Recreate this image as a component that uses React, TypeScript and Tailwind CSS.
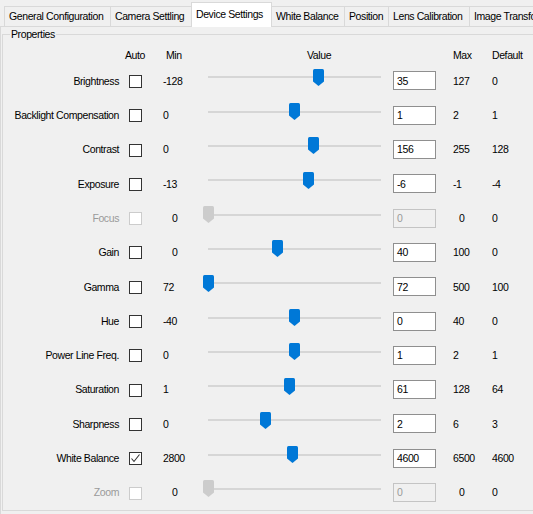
import React from "react";

type Row = {
  label: string;
  min: number;
  max: number;
  value: number;
  def: number;
  disabled?: boolean;
  checked?: boolean;
  minShift?: boolean;
  maxShift?: boolean;
};

const rows: Row[] = [
  { label: "Brightness", min: -128, max: 127, value: 35, def: 0 },
  { label: "Backlight Compensation", min: 0, max: 2, value: 1, def: 1 },
  { label: "Contrast", min: 0, max: 255, value: 156, def: 128 },
  { label: "Exposure", min: -13, max: -1, value: -6, def: -4 },
  { label: "Focus", min: 0, max: 0, value: 0, def: 0, disabled: true, minShift: true, maxShift: true },
  { label: "Gain", min: 0, max: 100, value: 40, def: 0, minShift: true },
  { label: "Gamma", min: 72, max: 500, value: 72, def: 100 },
  { label: "Hue", min: -40, max: 40, value: 0, def: 0 },
  { label: "Power Line Freq.", min: 0, max: 2, value: 1, def: 1 },
  { label: "Saturation", min: 1, max: 128, value: 61, def: 64 },
  { label: "Sharpness", min: 0, max: 6, value: 2, def: 3 },
  { label: "White Balance", min: 2800, max: 6500, value: 4600, def: 4600, checked: true },
  { label: "Zoom", min: 0, max: 0, value: 0, def: 0, disabled: true, minShift: true, maxShift: true },
];

const tabs = [
  { name: "General Configuration", w: "w-[107px]" },
  { name: "Camera Settling", w: "w-[81px]" },
  { name: "Device Settings", w: "w-[81px]", active: true },
  { name: "White Balance", w: "w-[73px]" },
  { name: "Position", w: "w-[44px]" },
  { name: "Lens Calibration", w: "w-[81px]" },
  { name: "Image Transform", w: "w-[80px]" },
];

function Thumb({ disabled }: { disabled?: boolean }) {
  return (
    <svg width="11" height="17" viewBox="0 0 11 17">
      <path
        d="M1.5 0 H9.5 Q11 0 11 1.5 V12.5 L5.5 17 L0 12.5 V1.5 Q0 0 1.5 0 Z"
        fill={disabled ? "#cccccc" : "#0078d7"}
      />
    </svg>
  );
}

function Checkbox({ checked, disabled }: { checked?: boolean; disabled?: boolean }) {
  return (
    <div
      className={
        "w-[13px] h-[13px] bg-white border flex items-center justify-center " +
        (disabled ? "border-[#cccccc]" : "border-[#333333]")
      }
    >
      {checked && (
        <svg width="11" height="11" viewBox="0 0 11 11">
          <polyline points="1.5,5.5 4,8.5 9.5,1.5" fill="none" stroke="#333333" strokeWidth="1.1" />
        </svg>
      )}
    </div>
  );
}

export default function App() {
  return (
    <div className="w-[533px] h-[514px] bg-[#f0f0f0] overflow-hidden font-['Liberation_Sans',Arial,sans-serif] text-[10.5px] tracking-[-0.4px] text-black leading-none">
      {/* tab bar */}
      <div className="h-[26px] flex items-end pl-[4px]">
        {tabs.map((t, i) =>
          t.active ? (
            <div
              key={t.name}
              className={
                t.w +
                " relative z-10 shrink-0 -ml-px -mb-px h-[25px] bg-white border-t border-l border-r border-[#d9d9d9] flex items-center pl-[4px] pb-[1px] whitespace-nowrap"
              }
            >
              {t.name}
            </div>
          ) : (
            <div
              key={t.name}
              className={
                t.w +
                " h-[20px] shrink-0 bg-[#f0f0f0] border-t border-r border-[#d9d9d9] flex items-center pl-[4px] whitespace-nowrap overflow-hidden " +
                (i === 0 ? "border-l" : "")
              }
            >
              {t.name}
            </div>
          )
        )}
      </div>

      {/* pane */}
      <div className="h-[488px] border-t border-l border-[#d9d9d9] pt-[7px] pl-[1px]">
        {/* group box */}
        <div className="relative w-[560px] h-[477px] border border-[#d9d9d9]">
          <span className="absolute left-[7px] top-[-7px] px-[1px] bg-[#f0f0f0] leading-[13px]">
            Properties
          </span>

          {/* header */}
          <div className="flex items-center h-[14px] mt-[13px]">
            <div className="w-[122px] shrink-0" />
            <div className="w-[41px] shrink-0">Auto</div>
            <div className="w-[141px] shrink-0">Min</div>
            <div className="w-[146px] shrink-0">Value</div>
            <div className="w-[39px] shrink-0">Max</div>
            <div className="shrink-0">Default</div>
          </div>

          {/* rows */}
          <div className="mt-[1.85px] flex flex-col">
            {rows.map((r) => {
              const frac = r.max === r.min ? 0 : (r.value - r.min) / (r.max - r.min);
              const left = 5 + frac * 173 - 5.5;
              return (
                <div key={r.label} className="flex items-center h-[34.3px] shrink-0">
                  <div
                    className={
                      "w-[116px] shrink-0 text-right whitespace-nowrap " +
                      (r.disabled ? "text-[#9a9a9a]" : "")
                    }
                  >
                    {r.label}
                  </div>
                  <div className="w-[10px] shrink-0" />
                  <div className="shrink-0 mt-[1px]">
                    <Checkbox checked={r.checked} disabled={r.disabled} />
                  </div>
                  <div className={"w-[61px] shrink-0 " + (r.minShift ? "pl-[30px]" : "pl-[21px]")}>
                    {r.min}
                  </div>
                  <div className="relative w-[190px] h-full shrink-0">
                    <div className="absolute left-[5px] w-[173px] top-[12.6px] h-[2px] bg-[#d6d6d6]" />
                    <div className="absolute top-[5px]" style={{ left: `${left}px` }}>
                      <Thumb disabled={r.disabled} />
                    </div>
                  </div>
                  <div
                    className={
                      "w-[43px] h-[19px] shrink-0 border flex items-center pl-[3px] " +
                      (r.disabled
                        ? "bg-[#f0f0f0] border-[#c4c4c4] text-[#9a9a9a]"
                        : "bg-white border-[#8f8f8f]")
                    }
                  >
                    {r.value}
                  </div>
                  <div className={"w-[56px] shrink-0 " + (r.maxShift ? "pl-[23px]" : "pl-[17px]")}>
                    {r.max}
                  </div>
                  <div className="shrink-0">{r.def}</div>
                </div>
              );
            })}
          </div>
        </div>
      </div>
    </div>
  );
}
